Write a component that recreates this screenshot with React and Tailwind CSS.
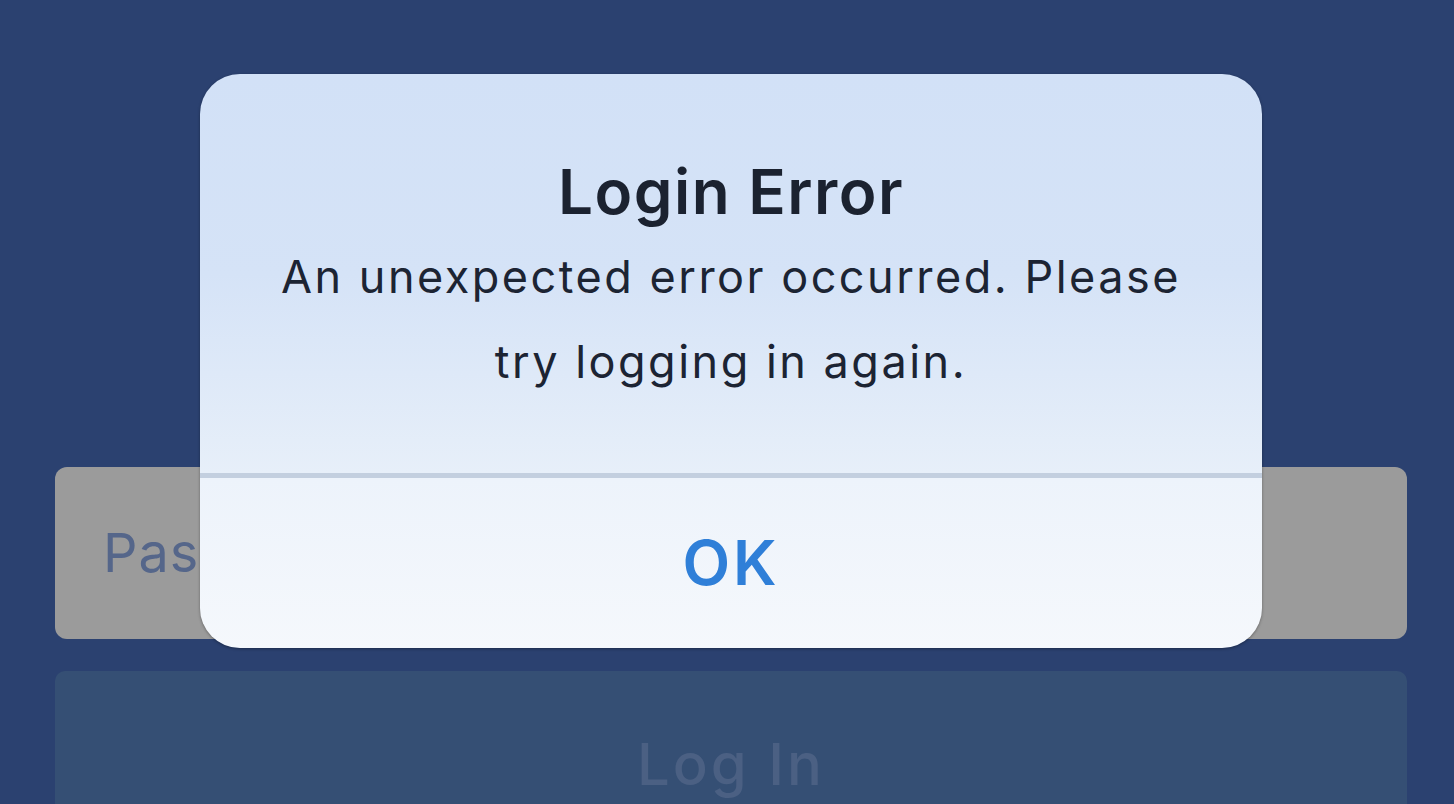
export default function App() {
  return (
    <div className="relative h-[804px] w-full overflow-hidden bg-[#2b4170] font-['Inter','Noto_Sans',sans-serif]">
      {/* login form behind the alert */}
      <div className="flex flex-col gap-[32px] pl-[55px] pr-[47px] pt-[467px]">
        <div className="flex h-[172px] items-center rounded-[12px] bg-[#9b9b9b] px-[48px]">
          <span className="text-[54px] leading-none tracking-[1px] text-[#55668a]">Password</span>
        </div>
        <div className="flex h-[200px] items-start justify-center rounded-[10px] bg-[#354f74] pt-[64px]">
          <span className="text-[58px] font-medium leading-none tracking-[3px] text-[#4b6083]">Log In</span>
        </div>
      </div>

      {/* alert */}
      <div className="absolute left-[200px] top-[74px] flex h-[574px] w-[1062px] flex-col overflow-hidden rounded-[40px] shadow-[0_1px_3px_rgba(0,0,0,0.35)]">
        <div className="flex h-[399px] flex-col items-center bg-gradient-to-b from-[#d2e1f7] via-[#d5e3f7] to-[#e7eff9] pt-[87px] text-center">
          <h1 className="text-[62px] font-semibold leading-none tracking-[1.5px] text-[#1b2230]">Login Error</h1>
          <p className="mt-[11px] text-[45px] leading-[85px] tracking-[2.5px] text-[#1c2433]">
            An unexpected error occurred. Please
            <br />
            try logging in again.
          </p>
        </div>
        <div className="h-[5px] bg-[#c3cfdf]" />
        <button
          type="button"
          className="flex flex-1 items-center justify-center bg-gradient-to-b from-[#edf3fb] to-[#f5f8fc] text-[62px] font-semibold leading-none tracking-[3px] text-[#2f7fd8]"
        >
          OK
        </button>
      </div>
    </div>
  );
}
